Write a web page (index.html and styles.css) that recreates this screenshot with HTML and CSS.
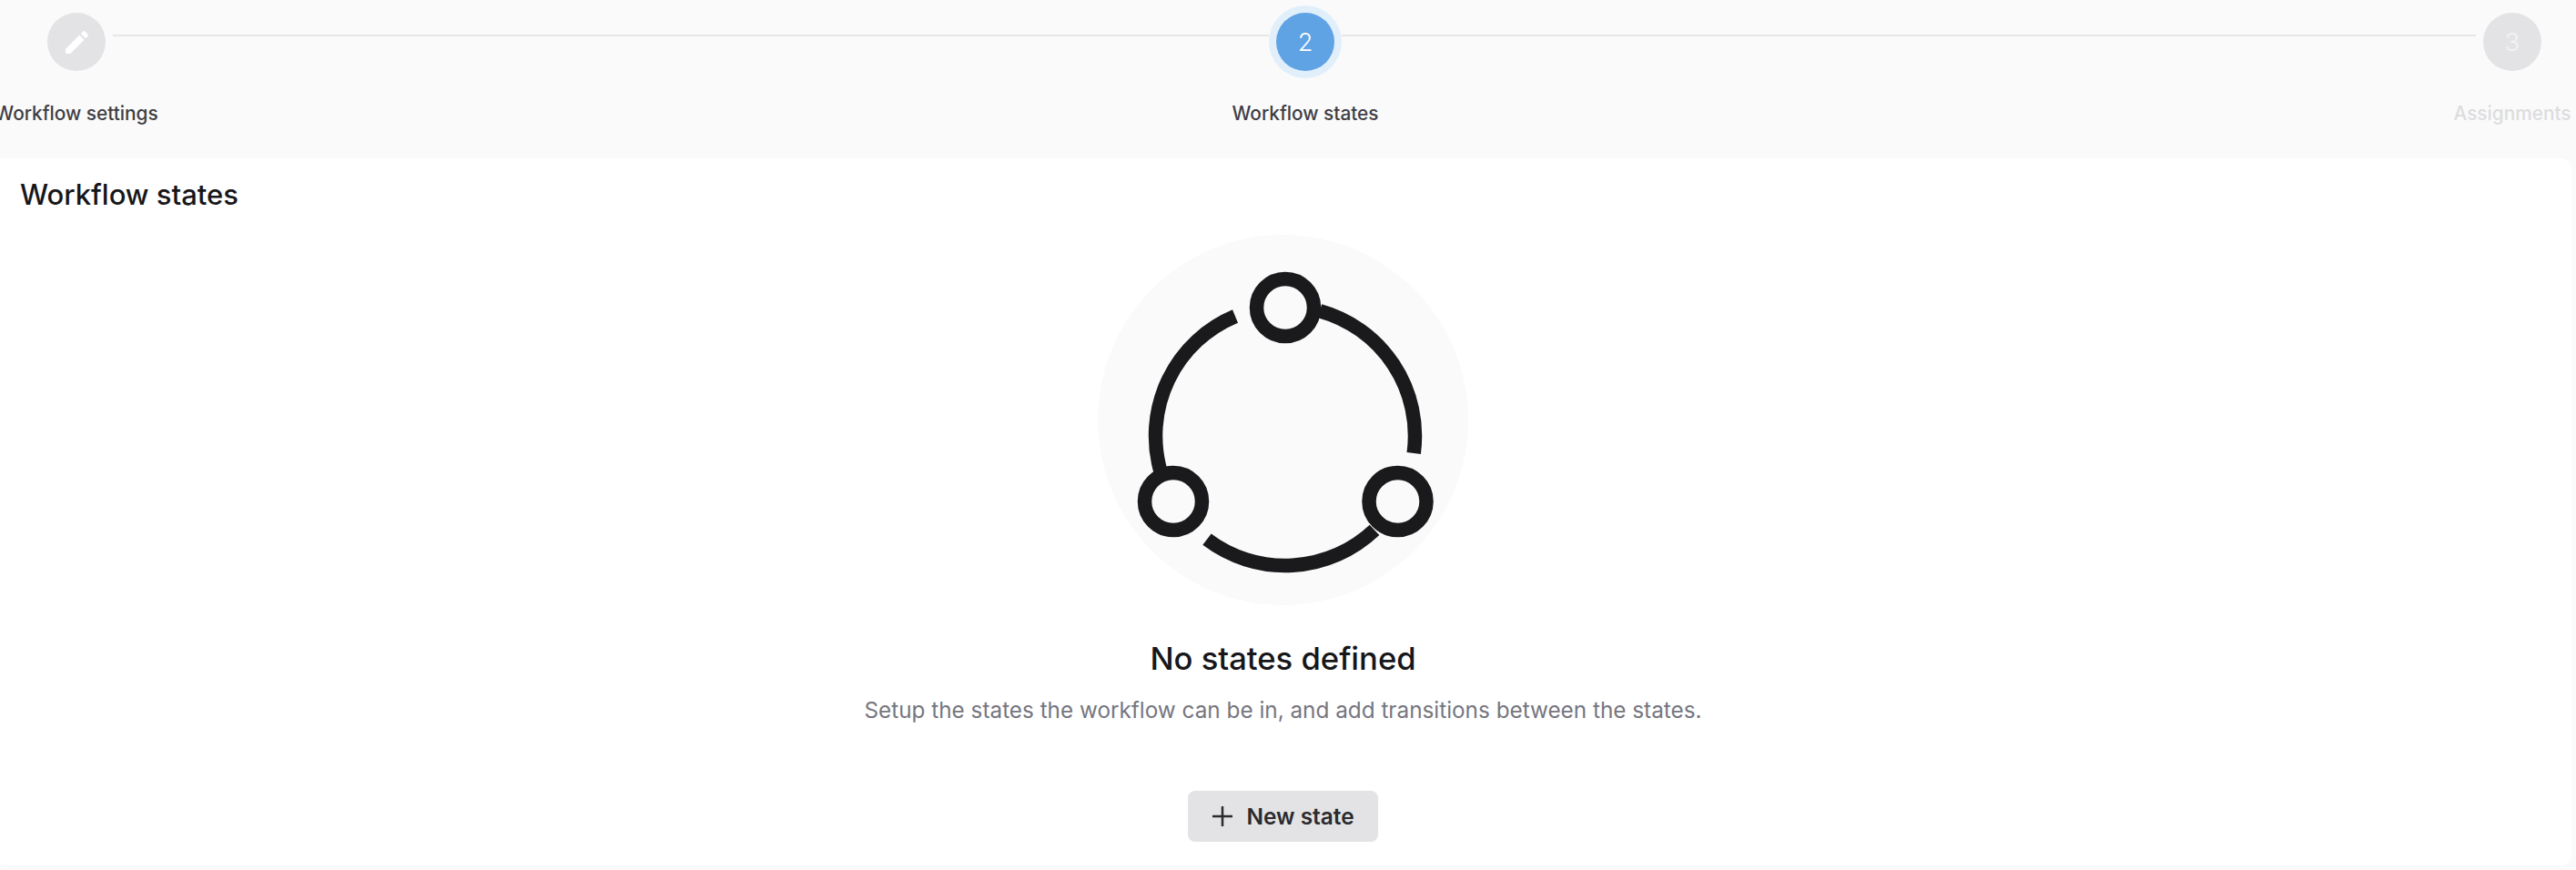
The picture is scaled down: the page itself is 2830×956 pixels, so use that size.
FILE: index.html
```html
<!DOCTYPE html>
<html lang="en">
<head>
<meta charset="utf-8">
<title>Workflow states</title>
<link rel="stylesheet" href="styles.css">
</head>
<body>
<div class="stepper">
  <div class="step">
    <div class="step-dot">
      <svg class="step-icon" viewBox="0 0 24 24"><path d="M3 17.25V21h3.75L17.81 9.94l-3.75-3.75L3 17.25zM20.71 7.04c.39-.39.39-1.02 0-1.41l-2.34-2.34c-.39-.39-1.02-.39-1.41 0l-1.83 1.83 3.75 3.75 1.83-1.83z"/></svg>
    </div>
    <div class="step-label">Workflow settings</div>
  </div>
  <div class="connector connector-first"></div>
  <div class="step">
    <div class="step-dot step-dot-active">2</div>
    <div class="step-label">Workflow states</div>
  </div>
  <div class="connector connector-second"></div>
  <div class="step">
    <div class="step-dot">3</div>
    <div class="step-label step-label-muted">Assignments</div>
  </div>
</div>
<main class="card">
  <h1 class="card-title">Workflow states</h1>
  <div class="empty">
    <div class="empty-art">
      <svg class="empty-icon" viewBox="0 0 407 407">
        <g class="arcs">
          <path d="M244 83.7A142.5 142.5 0 0 1 347.2 240"/>
          <path d="M304 324.4A142.5 142.5 0 0 1 120 334.6"/>
          <path d="M69 260A142.5 142.5 0 0 1 151 89.5"/>
        </g>
        <g class="rings">
          <circle cx="206" cy="80" r="31.5"/>
          <circle cx="83" cy="293" r="31.5"/>
          <circle cx="329.5" cy="293" r="31.5"/>
        </g>
      </svg>
    </div>
    <h2 class="empty-title">No states defined</h2>
    <p class="empty-text">Setup the states the workflow can be in, and add transitions between the states.</p>
    <button class="btn" type="button">
      <svg class="btn-icon" viewBox="0 0 24 24"><path d="M12 1v22M1 12h22"/></svg>
      <span>New state</span>
    </button>
  </div>
</main>
</body>
</html>
```
FILE: styles.css
```css
html, body {
  margin: 0;
  height: 956px;
  overflow: hidden;
  background: #fafafa;
  font-family: Inter, "Liberation Sans", sans-serif;
}
.stepper {
  display: flex;
  align-items: flex-start;
  height: 174px;
  box-sizing: border-box;
  padding: 14px 38px 0 52px;
}
.step {
  flex: none;
  width: 64px;
  display: flex;
  flex-direction: column;
  align-items: center;
}
.step-dot {
  width: 64px;
  height: 64px;
  flex: none;
  border-radius: 50%;
  background: #e3e3e5;
  color: #f3f3f4;
  display: flex;
  align-items: center;
  justify-content: center;
  font-size: 27px;
  font-weight: 300;
  line-height: 1;
}
.step-dot-active {
  background: #5fa3e5;
  color: #fff;
  box-shadow: 0 0 0 8px #e1effb;
}
.step-icon {
  width: 33px;
  height: 33px;
  fill: #fff;
}
.step-label {
  flex: none;
  margin-top: 35px;
  font-size: 20.8px;
  line-height: 24px;
  font-weight: 500;
  white-space: nowrap;
  color: #3e3e44;
}
.step-label-muted {
  color: #dcdcdf;
}
.connector {
  height: 2px;
  margin: 24px 8px 0;
  background: #e6e6e6;
}
.connector-first { flex: 1270 1 0; }
.connector-second { flex: 1246 1 0; }
.card {
  margin-left: -6px;
  width: 2831px;
  height: 777px;
  box-sizing: border-box;
  padding: 20px 28px 0;
  background: #fff;
  border-radius: 12px;
}
.card-title {
  margin: 0;
  font-size: 31px;
  line-height: 40px;
  font-weight: 500;
  color: #17171a;
}
.empty {
  display: flex;
  flex-direction: column;
  align-items: center;
  margin-top: 24px;
}
.empty-art {
  width: 407px;
  height: 407px;
  border-radius: 50%;
  background: #fafafa;
}
.empty-icon {
  display: block;
  width: 407px;
  height: 407px;
}
.arcs path {
  fill: none;
  stroke: #1a1a1c;
  stroke-width: 15.5;
}
.rings circle {
  fill: #fafafa;
  stroke: #1a1a1c;
  stroke-width: 15.5;
}
.empty-title {
  margin: 36px 0 0;
  font-size: 34.6px;
  line-height: 44px;
  font-weight: 500;
  color: #17171a;
}
.empty-text {
  margin: 18px 0 0;
  font-size: 24.3px;
  line-height: 34px;
  font-weight: 400;
  color: #76767f;
}
.btn {
  margin-top: 72px;
  display: flex;
  align-items: center;
  justify-content: center;
  gap: 14px;
  width: 209px;
  height: 56px;
  padding: 0;
  border: 0;
  border-radius: 8px;
  background: #e3e3e5;
  color: #2b2b2f;
  font-family: inherit;
  font-size: 24.4px;
  font-weight: 600;
}
.btn-icon {
  width: 24px;
  height: 24px;
  fill: none;
  stroke: #2b2b2f;
  stroke-width: 2.5;
}
```
